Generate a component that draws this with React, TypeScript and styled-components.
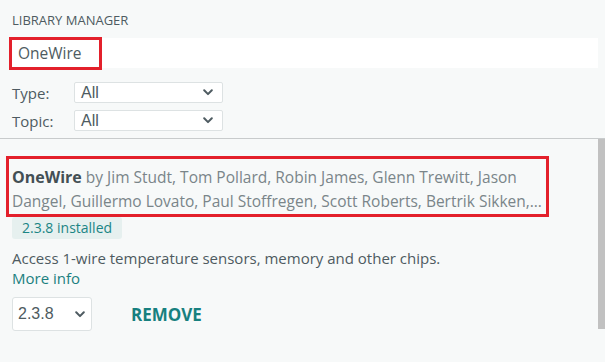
import styled, { createGlobalStyle } from "styled-components";

const GlobalStyle = createGlobalStyle`
  html, body {
    margin: 0;
    padding: 0;
    background: #f7f9f9;
  }
  body {
    font-family: "Open Sans", "Noto Sans", sans-serif;
    color: #4e5b61;
  }
`;

const Chevron = () => (
  <svg width="10" height="7" viewBox="0 0 10 7" fill="none">
    <path d="M1.2 1.3L5 5.1l3.8-3.8" stroke="#4e5b61" strokeWidth="2" strokeLinecap="round" strokeLinejoin="round" />
  </svg>
);

export default function App() {
  return (
    <>
      <GlobalStyle />
      <Panel>
        <Header>LIBRARY MANAGER</Header>
        <SearchBar>
          <SearchText>OneWire</SearchText>
          <Highlight $x={-1} $y={-1} $w={93} $h={33} />
        </SearchBar>
        <Filters>
          <FilterRow>
            <Label>Type:</Label>
            <Select>
              <span>All</span>
              <Chevron />
            </Select>
          </FilterRow>
          <FilterRow>
            <Label>Topic:</Label>
            <Select>
              <span>All</span>
              <Chevron />
            </Select>
          </FilterRow>
        </Filters>
        <List>
          <Items>
            <Item>
              <TitleWrap>
                <Title>
                  <Name>OneWire</Name> by Jim Studt, Tom Pollard, Robin James, Glenn Trewitt, Jason
                  Dangel, Guillermo Lovato, Paul Stoffregen, Scott Roberts, Bertrik Sikken, Mark Tillotson, Ken Butcher, Roger Clark, Love Nystrom
                </Title>
                <Highlight $x={-6} $y={-9} $w={543} $h={61} />
              </TitleWrap>
              <Badge>2.3.8 installed</Badge>
              <Description>Access 1-wire temperature sensors, memory and other chips.</Description>
              <MoreInfo>More info</MoreInfo>
              <Actions>
                <VersionSelect>
                  <span>2.3.8</span>
                  <Chevron />
                </VersionSelect>
                <RemoveButton>REMOVE</RemoveButton>
              </Actions>
            </Item>
          </Items>
          <Track>
            <Thumb />
          </Track>
        </List>
      </Panel>
    </>
  );
}

const Panel = styled.div`
  width: 605px;
  height: 362px;
  display: flex;
  flex-direction: column;
  overflow: hidden;
`;

const Header = styled.div`
  padding: 11px 0 0 12px;
  height: 27px;
  box-sizing: border-box;
  font-size: 13px;
  line-height: 18px;
  color: #4e5b61;
`;

const SearchBar = styled.div`
  position: relative;
  margin: 11px 7px 0 10px;
  height: 30px;
  background: #ffffff;
  display: flex;
  align-items: center;
`;

const SearchText = styled.span`
  padding-left: 8px;
  font-size: 15.5px;
  color: #4e5b61;
`;

const Highlight = styled.div<{ $x: number; $y: number; $w: number; $h: number }>`
  position: absolute;
  left: ${(p) => p.$x}px;
  top: ${(p) => p.$y}px;
  width: ${(p) => p.$w}px;
  height: ${(p) => p.$h}px;
  border: 3px solid #e3202b;
  box-sizing: border-box;
  pointer-events: none;
`;

const Filters = styled.div`
  display: flex;
  flex-direction: column;
  gap: 7px;
  padding: 14px 0 7px 12px;
`;

const FilterRow = styled.div`
  display: flex;
  align-items: center;
`;

const Label = styled.span`
  width: 62px;
  font-size: 15px;
  color: #4e5b61;
`;

const Select = styled.div`
  width: 149px;
  height: 21px;
  box-sizing: border-box;
  background: #ffffff;
  border: 1px solid #dde2e3;
  border-radius: 2px;
  display: flex;
  align-items: center;
  justify-content: space-between;
  padding: 0 9px 0 6px;
  font-family: "Liberation Sans", Arial, sans-serif;
  font-size: 16px;
  color: #4e5b61;
`;

const List = styled.div`
  flex: 1;
  display: flex;
  border-top: 1px solid #c8cbcc;
`;

const Items = styled.div`
  flex: 1;
  padding: 26px 0 0 12px;
`;

const Item = styled.div`
  display: flex;
  flex-direction: column;
  align-items: flex-start;
`;

const TitleWrap = styled.div`
  position: relative;
  width: 535px;
`;

const Title = styled.div`
  font-size: 15.5px;
  line-height: 24px;
  color: #7a8589;
  display: -webkit-box;
  -webkit-line-clamp: 2;
  -webkit-box-orient: vertical;
  overflow: hidden;
`;

const Name = styled.span`
  font-weight: 700;
  color: #434f54;
  font-size: 16px;
`;

const Badge = styled.div`
  margin: 4px 0 0 0;
  padding: 0 10px;
  height: 22px;
  line-height: 22px;
  background: #e6f0ef;
  border-radius: 3px;
  font-size: 14px;
  color: #1b8585;
`;

const Description = styled.div`
  margin-top: 9px;
  font-size: 15px;
  line-height: 20px;
  color: #4e5b61;
`;

const MoreInfo = styled.div`
  font-size: 15px;
  line-height: 20px;
  color: #1b8080;
`;

const Actions = styled.div`
  margin-top: 9px;
  display: flex;
  align-items: center;
  gap: 39px;
`;

const VersionSelect = styled.div`
  width: 80px;
  height: 34px;
  box-sizing: border-box;
  background: #ffffff;
  border: 1px solid #dde2e3;
  border-radius: 3px;
  display: flex;
  align-items: center;
  justify-content: space-between;
  padding: 0 6px 0 5px;
  font-family: "Liberation Sans", Arial, sans-serif;
  font-size: 16px;
  color: #4e5b61;
`;

const RemoveButton = styled.div`
  font-size: 17px;
  font-weight: 700;
  color: #17807f;
`;

const Track = styled.div`
  width: 7px;
`;

const Thumb = styled.div`
  height: 190px;
  background: #c1c1c1;
`;
